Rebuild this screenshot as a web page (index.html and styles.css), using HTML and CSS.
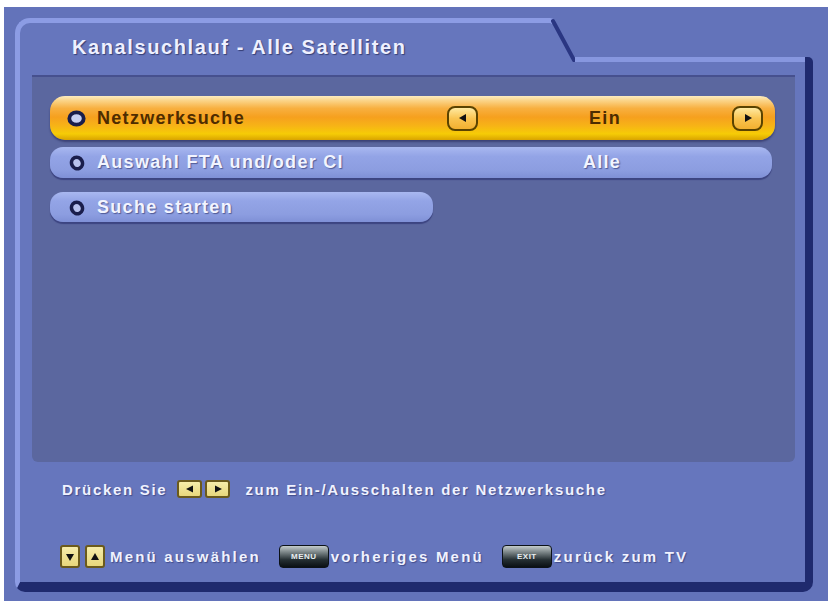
FILE: index.html
```html
<!DOCTYPE html>
<html lang="de">
<head>
<meta charset="utf-8">
<title>Kanalsuchlauf - Alle Satelliten</title>
<link rel="stylesheet" href="styles.css">
</head>
<body>
<div class="screen">
  <div class="frame">
    <div class="tabrow">
      <div class="tab"><h1 class="title">Kanalsuchlauf - Alle Satelliten</h1></div>
      <svg class="slope" width="25" height="44" viewBox="0 0 25 44">
        <polygon points="0,0 3,0 25,40 25,44 0,44" fill="#6676bd"/>
        <path d="M0 2.5 Q2 2.5 3.5 4.5" stroke="#8c9ce4" stroke-width="5" fill="none"/>
        <line x1="3" y1="3" x2="24" y2="42" stroke="#2a3682" stroke-width="4" stroke-linecap="round"/>
      </svg>
      <div class="tabcap"><div class="capedge"></div></div>
    </div>
    <div class="panel">
      <div class="content">
        <div class="row row-active">
          <svg class="ring ring-big" width="19" height="17" viewBox="0 0 19 17"><ellipse cx="9.5" cy="8.5" rx="7.2" ry="6.2" fill="#c8d0f2" stroke="#1a1e4c" stroke-width="3.8"/></svg>
          <span class="label">Netzwerksuche</span>
          <span class="arrowbtn"><svg width="10" height="10" viewBox="0 0 10 10"><polygon points="1,5 8,1 8,9" fill="#111"/></svg></span>
          <span class="value">Ein</span>
          <span class="arrowbtn"><svg width="10" height="10" viewBox="0 0 10 10"><polygon points="9,5 2,1 2,9" fill="#111"/></svg></span>
        </div>
        <div class="row row-plain row-wide">
          <svg class="ring" width="19" height="17" viewBox="0 0 19 17"><ellipse cx="10" cy="9" rx="5.4" ry="5.8" transform="rotate(-25 10 9)" fill="#b8c2ee" stroke="#1a1e4c" stroke-width="3.6"/></svg>
          <span class="label">Auswahl FTA und/oder CI</span>
          <span class="slot"></span>
          <span class="value">Alle</span>
          <span class="slot"></span>
        </div>
        <div class="row row-plain row-short">
          <svg class="ring" width="19" height="17" viewBox="0 0 19 17"><ellipse cx="10" cy="9" rx="5.4" ry="5.8" transform="rotate(-25 10 9)" fill="#b8c2ee" stroke="#1a1e4c" stroke-width="3.6"/></svg>
          <span class="label">Suche starten</span>
        </div>
      </div>
      <div class="footer">
        <div class="hint">
          <span>Drücken Sie</span>
          <span class="keys">
            <span class="key key-small"><svg width="10" height="10" viewBox="0 0 10 10"><polygon points="1,5 8,1.5 8,8.5" fill="#111"/></svg></span>
            <span class="key key-small"><svg width="10" height="10" viewBox="0 0 10 10"><polygon points="9,5 2,1.5 2,8.5" fill="#111"/></svg></span>
          </span>
          <span class="hint-text">zum Ein-/Ausschalten der Netzwerksuche</span>
        </div>
        <div class="legend">
          <span class="keys keys-tall">
            <span class="key key-tall"><svg width="10" height="10" viewBox="0 0 10 10"><polygon points="5,9 1,2 9,2" fill="#111"/></svg></span>
            <span class="key key-tall"><svg width="10" height="10" viewBox="0 0 10 10"><polygon points="5,1 1,8 9,8" fill="#111"/></svg></span>
          </span>
          <span class="legend-text">Menü auswählen</span>
          <span class="rkey">MENU</span>
          <span class="legend-text">vorheriges Menü</span>
          <span class="rkey">EXIT</span>
          <span class="legend-text">zurück zum TV</span>
        </div>
      </div>
    </div>
  </div>
</div>
</body>
</html>
```

FILE: styles.css
```css
html, body {
  margin: 0;
  padding: 0;
  background: #ffffff;
}

body {
  width: 828px;
  height: 601px;
  overflow: hidden;
  padding: 7px 0 0 4px;
  box-sizing: border-box;
  font-family: "Liberation Sans", Arial, sans-serif;
}

.screen {
  width: 824px;
  height: 594px;
  box-sizing: border-box;
  background: #6373ba;
  padding: 11px 11px 2px 11px;
}

.frame {
  width: 798px;
  display: flex;
  flex-direction: column;
}

.tabrow {
  display: flex;
  height: 44px;
}

.tab {
  width: 535px;
  height: 44px;
  box-sizing: border-box;
  background: #6676bd;
  border-top: 5px solid #8c9ce4;
  border-left: 5px solid #8c9ce4;
  border-top-left-radius: 15px;
  padding: 12px 0 0 52px;
}

.title {
  margin: 0;
  font-size: 20px;
  line-height: 24px;
  font-weight: bold;
  letter-spacing: 1.6px;
  color: #eef0ff;
  text-shadow: 1px 1px 1px rgba(20, 25, 70, 0.6);
  white-space: nowrap;
}

.slope {
  display: block;
  flex: none;
}

.tabcap {
  flex: 1;
  display: flex;
  flex-direction: column;
  justify-content: flex-end;
}

.capedge {
  height: 5px;
  background: #8797df;
  border-right: 8px solid #1f2a6e;
  border-top-right-radius: 9px;
}

.panel {
  background: #6676bd;
  border-left: 5px solid #8c9ce4;
  border-right: 8px solid #1f2a6e;
  border-bottom: 10px solid #1f2a6e;
  border-radius: 0 0 10px 10px;
  padding: 13px 10px 0 12px;
  display: flex;
  flex-direction: column;
}

.content {
  height: 387px;
  box-sizing: border-box;
  background: #5b679f;
  border-top: 2px solid #46508e;
  border-radius: 0 0 6px 6px;
  padding: 19px 20px 0 18px;
  display: flex;
  flex-direction: column;
  align-items: flex-start;
}

.row {
  display: grid;
  grid-template-columns: 19px 11px 1fr 31px 254px 31px;
  align-items: center;
  box-sizing: border-box;
  padding: 0 12px 0 17px;
  width: 725px;
  font-size: 18px;
  font-weight: bold;
  letter-spacing: 1.3px;
  white-space: nowrap;
}

.ring {
  grid-column: 1;
  display: block;
}

.label {
  grid-column: 3;
}

.value {
  text-align: center;
}

.row-active {
  height: 44px;
  border-radius: 15px;
  color: #4e2c00;
  background: linear-gradient(180deg, #fdecc0 0%, #fbd58a 10%, #f8b040 28%, #f6a01e 48%, #f7b416 68%, #f6cc06 86%, #d9a400 100%);
  box-shadow: 0 2px 2px rgba(30, 30, 80, 0.5);
}

.row-plain {
  height: 31px;
  border-radius: 13px;
  color: #f2f4ff;
  text-shadow: 1px 1px 1px rgba(30, 35, 90, 0.55);
  background: linear-gradient(180deg, #a9b8f0 0%, #93a4e6 30%, #8c9de0 75%, #7f90d6 100%);
  box-shadow: 0 2px 1px rgba(40, 45, 110, 0.6);
}

.row-wide {
  margin-top: 7px;
  width: 722px;
}

.row-short {
  margin-top: 14px;
  width: 383px;
  height: 30px;
}

.arrowbtn {
  width: 31px;
  height: 25px;
  box-sizing: border-box;
  border: 2.5px solid #5a4300;
  border-radius: 8px;
  background: linear-gradient(180deg, #ffe9a0 0%, #f9c451 50%, #f2b030 100%);
  display: flex;
  align-items: center;
  justify-content: center;
}

.arrowbtn svg {
  display: block;
}

.footer {
  height: 120px;
  box-sizing: border-box;
  padding: 18px 0 0 28px;
  color: #f0f2ff;
  font-size: 15px;
  font-weight: bold;
  letter-spacing: 1.7px;
  white-space: nowrap;
  text-shadow: 1px 1px 1px rgba(30, 35, 90, 0.5);
}

.hint {
  display: flex;
  align-items: center;
  height: 18px;
  padding-left: 2px;
}

.keys {
  display: flex;
  gap: 3px;
  margin: 0 15px 0 10px;
}

.key {
  box-sizing: border-box;
  border: 2px solid #6b5a1c;
  border-radius: 3px;
  background: linear-gradient(180deg, #f6ecaa 0%, #e8d77c 100%);
  display: flex;
  align-items: center;
  justify-content: center;
}

.key svg {
  display: block;
}

.key-small {
  width: 25px;
  height: 18px;
}

.legend {
  display: flex;
  align-items: center;
  height: 23px;
  margin-top: 47px;
  letter-spacing: 2.2px;
}

.keys-tall {
  gap: 5px;
  margin: 0 5px 0 0;
}

.key-tall {
  width: 20px;
  height: 23px;
}

.legend-text {
  margin-right: 18px;
}

.rkey {
  width: 50px;
  height: 23px;
  box-sizing: border-box;
  margin-right: 2px;
  border: 1px solid #0c1218;
  border-radius: 4px;
  background: linear-gradient(180deg, #c4cccc 0%, #7a8486 30%, #263034 65%, #0a1014 100%);
  color: #e8eef0;
  font-size: 8px;
  letter-spacing: 0.5px;
  text-shadow: none;
  display: flex;
  align-items: center;
  justify-content: center;
}
```
